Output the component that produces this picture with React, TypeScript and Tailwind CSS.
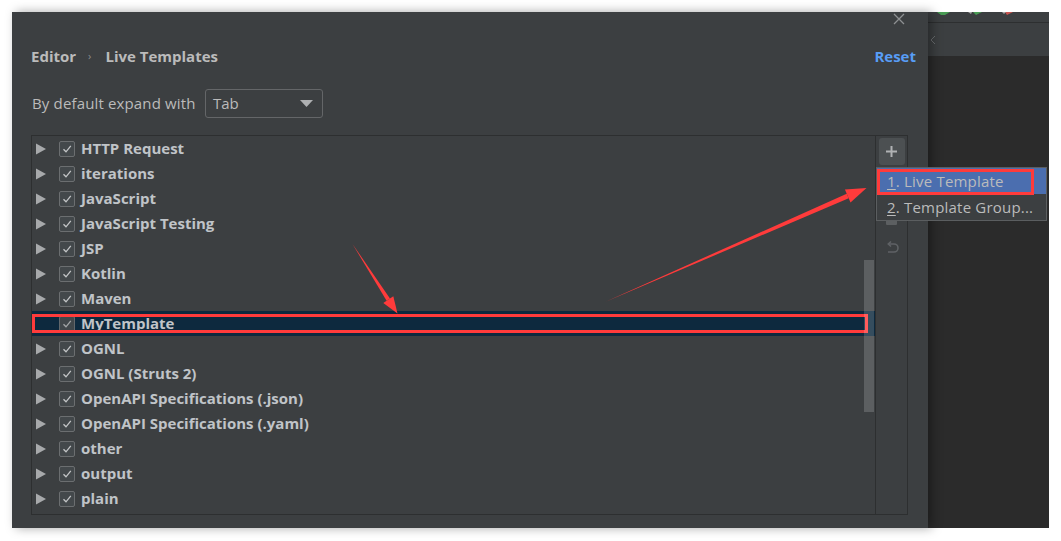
import React from "react"

const groups = [
    { name: "HTTP Request" },
    { name: "iterations" },
    { name: "JavaScript" },
    { name: "JavaScript Testing" },
    { name: "JSP" },
    { name: "Kotlin" },
    { name: "Maven" },
    { name: "MyTemplate", selected: true, empty: true },
    { name: "OGNL" },
    { name: "OGNL (Struts 2)" },
    { name: "OpenAPI Specifications (.json)" },
    { name: "OpenAPI Specifications (.yaml)" },
    { name: "other" },
    { name: "output" },
    { name: "plain" },
]

function Expander() {
    return (
        <svg width="10" height="12" viewBox="0 0 10 12" className="shrink-0">
            <polygon points="0,0.5 10,6 0,11.5" fill="#a7a9ab" />
        </svg>
    )
}

function Check({ dim }: { dim?: boolean }) {
    return (
        <div className={`w-4 h-4 shrink-0 rounded-[2px] border flex items-center justify-center ${dim ? 'border-[#62676b] bg-[#41474b]' : 'border-[#6b6e70] bg-[#43484b]'}`}>
            <svg width="12" height="12" viewBox="0 0 12 12">
                <path d="M2.5 6.2 L5 8.8 L9.8 2.8" fill="none" stroke={dim ? '#a3a6a8' : '#c4c6c8'} strokeWidth="1.3" />
            </svg>
        </div>
    )
}

function TemplateRow({ group }: { group: typeof groups[0] }) {
    return (
        <div className={`relative h-[25px] shrink-0 flex items-center pl-[4px] ${group.selected ? 'bg-[#0d293e]' : ''}`}>
            <div className="w-[10px] shrink-0">{!group.empty && <Expander />}</div>
            <div className="ml-[13px]"><Check dim={group.selected} /></div>
            <span className="ml-[6px] text-[15px] font-bold text-[#c0c4c8] whitespace-nowrap">{group.name}</span>
            {group.selected && (
                <div className="absolute left-0 top-[3px] w-[836px] h-[19px] border-[3px] border-[#ff3b3b]" />
            )}
        </div>
    )
}

export default function App() {
    return (
        <div className="relative w-[1061px] h-[541px] bg-white overflow-hidden font-['Open_Sans','Noto_Sans',sans-serif]">
            <div className="flex pt-[12px] pl-[12px]">

                {/* settings dialog */}
                <div className="relative z-10 w-[916px] h-[516px] bg-[#3c3f41] pl-[19px] pt-[32px] flex flex-col shadow-[4px_0_10px_rgba(0,0,0,0.35)]">
                    <svg width="12" height="12" viewBox="0 0 12 12" className="absolute left-[881px] top-[1px]">
                        <path d="M1 1 L11 11 M11 1 L1 11" stroke="#8e9092" strokeWidth="1.3" />
                    </svg>

                    <div className="h-6 flex items-center justify-between pr-[12px]">
                        <div className="flex items-center text-[15px] font-bold text-[#bbbbbb]">
                            <span>Editor</span>
                            <span className="ml-[12px] mr-[14px] text-[11px] font-normal text-[#8c8e90]">›</span>
                            <span>Live Templates</span>
                        </div>
                        <span className="text-[15px] font-bold text-[#589df6]">Reset</span>
                    </div>

                    <div className="mt-[21px] h-[29px] flex items-center">
                        <span className="w-[174px] pl-[1px] text-[15px] tracking-[0.15px] text-[#bbbbbb]">By default expand with</span>
                        <div className="w-[118px] h-[29px] border border-[#646668] rounded-[3px] flex items-center justify-between pl-[7px] pr-[9px]">
                            <span className="text-[15px] text-[#bbbbbb]">Tab</span>
                            <svg width="13" height="7" viewBox="0 0 13 7">
                                <polygon points="0,0 13,0 6.5,7" fill="#aeb0b2" />
                            </svg>
                        </div>
                    </div>

                    <div className="mt-[17px] w-[877px] h-[380px] border border-[#2d2f30] flex">
                        <div className="relative flex-1 flex flex-col overflow-hidden">
                            {groups.map((g) => (
                                <TemplateRow key={g.name} group={g} />
                            ))}
                            {/* next row, scrolled out of view */}
                            <div className="h-[25px] shrink-0 flex items-center pl-[4px]">
                                <div className="w-[10px] shrink-0"><Expander /></div>
                                <div className="ml-[13px]"><Check /></div>
                            </div>
                            <div className="absolute left-[832px] top-[124px] w-[10px] h-[152px] bg-white/[0.17]" />
                        </div>

                        <div className="w-[32px] border-l border-[#2d2f30] flex flex-col items-center">
                            <div className="mt-[2px] w-[26px] h-[27px] rounded-[3px] bg-[#4c5052] flex items-center justify-center">
                                <svg width="13" height="13" viewBox="0 0 13 13">
                                    <path d="M6.5 1 V12 M1 6.5 H12" stroke="#b0b2b4" strokeWidth="2" />
                                </svg>
                            </div>
                            <div className="h-[55px]" />
                            <div className="w-[11px] h-[5px] bg-[#5c5f61] rounded-b-[1px]" />
                            <svg width="16" height="16" viewBox="0 0 16 16" className="mt-[15px]">
                                <path d="M5 4 H10 A4 4 0 0 1 10 12 H4" fill="none" stroke="#5f6265" strokeWidth="1.6" />
                                <path d="M7 1.5 L4.3 4 L7 6.5" fill="none" stroke="#5f6265" strokeWidth="1.6" />
                            </svg>
                        </div>
                    </div>
                </div>

                {/* ide behind the dialog */}
                <div className="w-[121px] h-[516px] flex flex-col">
                    <div className="relative h-[11px] bg-[#3c3f41] border-b border-[#2d2f30]">
                        <svg width="121" height="4" viewBox="0 0 121 4" className="absolute left-0 top-0">
                            <polygon points="9,0 22,0 17,3 13,3" fill="#499c54" />
                            <polygon points="40,0 44,0 43,2" fill="#aaaaaa" />
                            <polygon points="45,0 54,0 48,3" fill="#499c54" />
                            <polygon points="77,0 85,0 79,3" fill="#c75450" />
                            <polygon points="74,0 78,0 76,2" fill="#aaaaaa" />
                        </svg>
                    </div>
                    <div className="h-[33px] bg-[#3c3f41] flex items-center pl-[2px]">
                        <svg width="6" height="10" viewBox="0 0 6 10">
                            <path d="M5 1 L1 5 L5 9" fill="none" stroke="#6a6d70" strokeWidth="1" />
                        </svg>
                    </div>
                    <div className="flex-1 bg-[#2b2b2b]" />
                </div>
            </div>

            {/* add-template popup */}
            <div className="absolute z-20 left-[876px] top-[167px] w-[171px] h-[54px] bg-[#3c3f41] border border-[#5b5e60] flex flex-col text-[15px] tracking-[0.2px] text-[#bbbbbb]">
                <div className="relative h-[26px] bg-[#4b6eaf] flex items-center pl-[10px] whitespace-nowrap">
                    <span><span className="underline underline-offset-2">1</span>. Live Template</span>
                    <div className="absolute left-0 top-[1px] w-[157px] h-[26px] border-[3px] border-[#ff3b3b]" />
                </div>
                <div className="h-[26px] flex items-center pl-[10px] whitespace-nowrap">
                    <span><span className="underline underline-offset-2">2</span>. Template Group...</span>
                </div>
            </div>

            {/* annotation arrows */}
            <svg width="1061" height="541" viewBox="0 0 1061 541" className="absolute inset-0 z-30 pointer-events-none">
                <polygon points="352.5,244 390,298.5 386.6,300.7" fill="#ff3b3b" />
                <polygon points="397.5,313.5 383.3,302.9 393.3,296.3" fill="#ff3b3b" />
                <polygon points="605,302 846.7,193.7 848.7,198.3" fill="#ff3b3b" />
                <polygon points="866.5,188 844.9,189.6 850.5,202.4" fill="#ff3b3b" />
            </svg>
        </div>
    )
}
